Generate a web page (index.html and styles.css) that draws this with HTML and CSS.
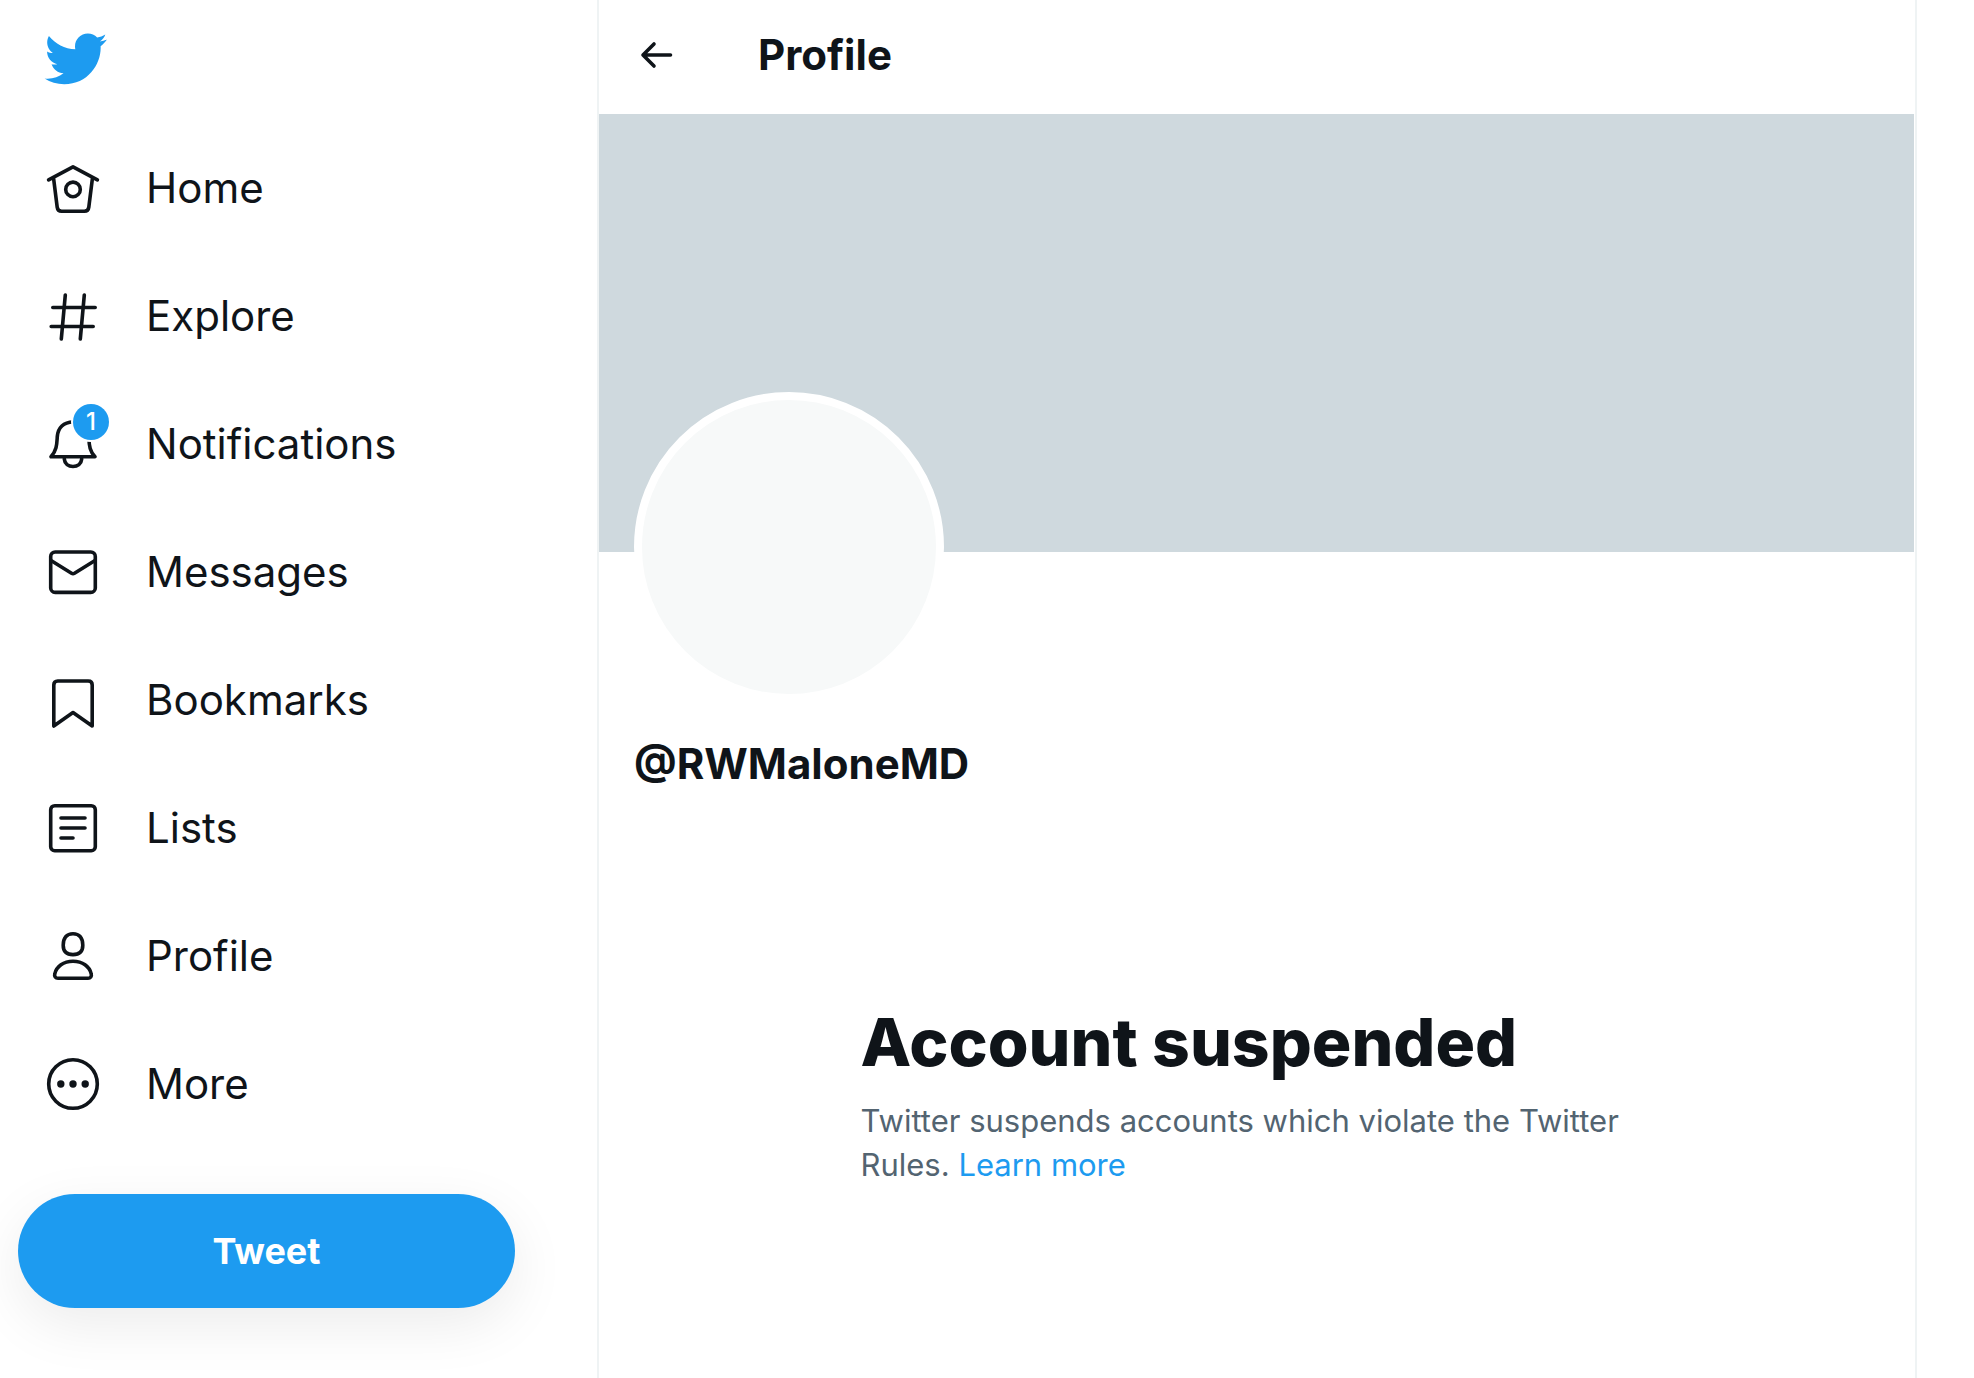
FILE: index.html
```
<!DOCTYPE html>
<html lang="en">
<head>
<meta charset="utf-8">
<title>Profile / Twitter</title>
<meta name="viewport" content="width=device-width, initial-scale=1">
<link rel="stylesheet" href="styles.css">
</head>
<body>
<div class="layout">
  <header class="sidebar">
    <a class="logo" href="#" aria-label="Twitter">
      <svg viewBox="0 0 24 24" aria-hidden="true"><path d="M23.643 4.937c-.835.37-1.732.62-2.675.733.962-.576 1.7-1.49 2.048-2.578-.9.534-1.897.922-2.958 1.13-.85-.904-2.06-1.47-3.4-1.47-2.572 0-4.658 2.086-4.658 4.66 0 .364.042.718.12 1.06-3.873-.195-7.304-2.05-9.602-4.868-.4.69-.63 1.49-.63 2.342 0 1.616.823 3.043 2.072 3.878-.764-.025-1.482-.234-2.11-.583v.06c0 2.257 1.605 4.14 3.737 4.568-.392.106-.803.162-1.227.162-.3 0-.593-.028-.877-.082.593 1.85 2.313 3.198 4.352 3.234-1.595 1.25-3.604 1.995-5.786 1.995-.376 0-.747-.022-1.112-.065 2.062 1.323 4.51 2.093 7.14 2.093 8.57 0 13.255-7.098 13.255-13.254 0-.2-.005-.402-.014-.602.91-.658 1.7-1.477 2.323-2.41z"/></svg>
    </a>
    <nav class="nav" aria-label="Primary">
      <a class="nav-item" href="#">
        <svg class="icon" viewBox="0 0 56 56" aria-hidden="true"><path d="M3.6 19.8 28 6.8l24.4 13M8.6 18.5l3.6 28.8q.5 4 4.4 4h22.8q3.9 0 4.4-4l3.6-28.8"/><circle cx="28" cy="29.4" r="7.3"/></svg>
        <span>Home</span>
      </a>
      <a class="nav-item" href="#">
        <svg class="icon" viewBox="0 0 56 56" aria-hidden="true"><path d="M20.3 7l-4 44M39.3 7l-4 44M7.8 19.5h42.4M6.2 38.5h42"/></svg>
        <span>Explore</span>
      </a>
      <a class="nav-item" href="#">
        <span class="icon-wrap">
          <svg class="icon" viewBox="0 0 56 56" aria-hidden="true"><path d="M28 6C18.500 6 13 12 12.300 20.500C11.800 28 12 34 6 40.800H50C45 35.500 44.200 30 43.800 22C43.300 11.500 37 6 28 6M19.300 43c.4 4.800 4.200 7.500 8.700 7.500s8.300-2.700 8.700-7.500"/></svg>
          <span class="badge">1</span>
        </span>
        <span>Notifications</span>
      </a>
      <a class="nav-item" href="#">
        <svg class="icon" viewBox="0 0 56 56" aria-hidden="true"><rect x="5.700" y="8" width="44.600" height="40.400" rx="4.500"/><path d="M6 16.500 26.500 29.300q1.500.9 3 0L50 16.500"/></svg>
        <span>Messages</span>
      </a>
      <a class="nav-item" href="#">
        <svg class="icon" viewBox="0 0 56 56" aria-hidden="true"><path d="M8.800 54V13q0-4 4-4h30.400q4 0 4 4v41L28 40.600z"/></svg>
        <span>Bookmarks</span>
      </a>
      <a class="nav-item" href="#">
        <svg class="icon" viewBox="0 0 56 56" aria-hidden="true"><rect x="5.700" y="5.700" width="44.600" height="45" rx="4"/><path d="M16 18h24M16 28h24M16 38h12"/></svg>
        <span>Lists</span>
      </a>
      <a class="nav-item" href="#">
        <svg class="icon" viewBox="0 0 56 56" aria-hidden="true"><path d="M28 5.700c6.300 0 9.800 4.300 9.800 11.600 0 6.100-3.600 9.300-9.800 9.300s-9.800-3.200-9.800-9.300C18.200 10 21.700 5.700 28 5.700zM28 33.300c9.500 0 16.500 5.200 18.200 12.500.7 2.700-.7 4.500-3.200 4.500H13c-2.500 0-3.900-1.800-3.200-4.500C11.500 38.500 18.500 33.300 28 33.300z"/></svg>
        <span>Profile</span>
      </a>
      <a class="nav-item" href="#">
        <svg class="icon" viewBox="0 0 56 56" aria-hidden="true"><circle cx="28" cy="28" r="24.300"/><g class="dots"><circle cx="15.800" cy="28" r="3.700"/><circle cx="28" cy="28" r="3.700"/><circle cx="40.200" cy="28" r="3.700"/></g></svg>
        <span>More</span>
      </a>
    </nav>
    <button class="tweet" type="button">Tweet</button>
  </header>
  <main class="main">
    <div class="topbar">
      <button class="back" type="button" aria-label="Back">
        <svg viewBox="0 0 44 44" aria-hidden="true"><path d="M36.500 22H9M20 11 9 22l11 11"/></svg>
      </button>
      <h2 class="title">Profile</h2>
    </div>
    <div class="banner"></div>
    <section class="profile">
      <div class="avatar"></div>
      <h1 class="handle">@RWMaloneMD</h1>
    </section>
    <section class="notice">
      <h2 class="notice-title">Account suspended</h2>
      <p class="notice-text">Twitter suspends accounts which violate the Twitter Rules. <a href="#">Learn more</a></p>
    </section>
  </main>
</div>
</body>
</html>
```
FILE: styles.css
```
* { box-sizing: border-box; }

body {
  margin: 0;
  background: #fff;
  color: #0f1419;
  font-family: Inter, "Liberation Sans", sans-serif;
}

h1, h2, p { margin: 0; }
a { color: inherit; text-decoration: none; }
button { border: 0; font: inherit; cursor: pointer; }
svg { display: block; }

.layout {
  display: grid;
  grid-template-columns: minmax(0, 597fr) minmax(0, 1320fr) minmax(0, 57fr);
  min-height: 100vh;
}

/* Sidebar */
.sidebar { padding: 26px 82px 0 18px; }

.logo {
  display: block;
  width: 66px;
  margin: 0 0 32px 24px;
}
.logo svg { width: 66px; height: 66px; fill: #1d9bf0; }

.nav { display: flex; flex-direction: column; }

.nav-item {
  display: flex;
  align-items: center;
  gap: 45px;
  height: 128px;
  padding-left: 27px;
  font-size: 42px;
  line-height: 56px;
}

.icon {
  flex: none;
  width: 56px;
  height: 56px;
  fill: none;
  stroke: #0f1419;
  stroke-width: 3.6;
  stroke-linecap: round;
  stroke-linejoin: round;
}
.dots { fill: #0f1419; stroke: none; }

.icon-wrap { position: relative; }

.badge {
  position: absolute;
  top: -12px;
  right: -8px;
  width: 36px;
  height: 36px;
  border-radius: 50%;
  background: #1d9bf0;
  box-shadow: 0 0 0 2px #fff;
  color: #fff;
  font-size: 24px;
  font-weight: 500;
  line-height: 36px;
  text-align: center;
}

.tweet {
  display: block;
  width: 100%;
  height: 114px;
  margin-top: 46px;
  border-radius: 57px;
  background: #1d9bf0;
  box-shadow: 0 17px 56px rgba(0, 0, 0, 0.08);
  color: #fff;
  font-size: 36px;
  font-weight: 700;
}

/* Profile column */
.main {
  border: solid #eff3f4;
  border-width: 0 2px;
}

.topbar {
  display: flex;
  align-items: center;
  gap: 80px;
  height: 114px;
  padding: 0 35px 4px;
}

.back {
  width: 44px;
  height: 44px;
  padding: 0;
  background: none;
}
.back svg {
  fill: none;
  stroke: #0f1419;
  stroke-width: 3.6;
  stroke-linecap: round;
  stroke-linejoin: round;
}

.title, .handle {
  font-size: 42px;
  font-weight: 700;
  line-height: 52px;
}

.banner {
  aspect-ratio: 3 / 1;
  margin-right: 1px;
  background: #cfd9de;
}

.profile { padding: 0 35px; }

.avatar {
  position: relative;
  width: 310px;
  height: 310px;
  margin-top: -160px;
  border: 8px solid #fff;
  border-radius: 50%;
  background: #f7f9f9;
}

.handle { margin-top: 36px; }

.notice {
  max-width: 793px;
  margin: 212px auto 0;
}

.notice-title {
  font-size: 66px;
  font-weight: 800;
  line-height: 80px;
}

.notice-text {
  margin-top: 17px;
  color: #536471;
  font-size: 31px;
  line-height: 44px;
}
.notice-text a { color: #1d9bf0; }
```
